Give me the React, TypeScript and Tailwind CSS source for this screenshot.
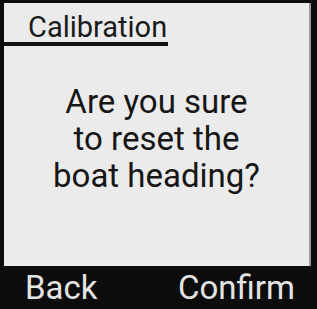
export default function App() {
  return (
    <div
      className="w-[317px] h-[309px] bg-[#0c0c0c] flex flex-col pt-[3px]"
      style={{ fontFamily: "Roboto, 'Liberation Sans', sans-serif" }}
    >
      <div className="ml-[4px] mr-[6px] h-[263px] bg-[#ebebeb] border-r-2 border-[#9a9a9a] flex flex-col">
        <div className="w-[164px] border-b-4 border-[#111] pl-[24px] pt-[10px] h-[43px]">
          <div className="text-[29px] leading-[28px] text-[#1a1a1a]">Calibration</div>
        </div>
        <div className="pt-[37px] flex flex-col items-center text-[33px] leading-[37px] text-[#161616] text-center">
          <div>Are you sure</div>
          <div>to reset the</div>
          <div>boat heading?</div>
        </div>
      </div>
      <div className="h-[43px] flex items-center justify-between pl-[25px] pr-[22px] text-[33px] leading-[43px] text-[#e4e4e4]">
        <span>Back</span>
        <span>Confirm</span>
      </div>
    </div>
  );
}
